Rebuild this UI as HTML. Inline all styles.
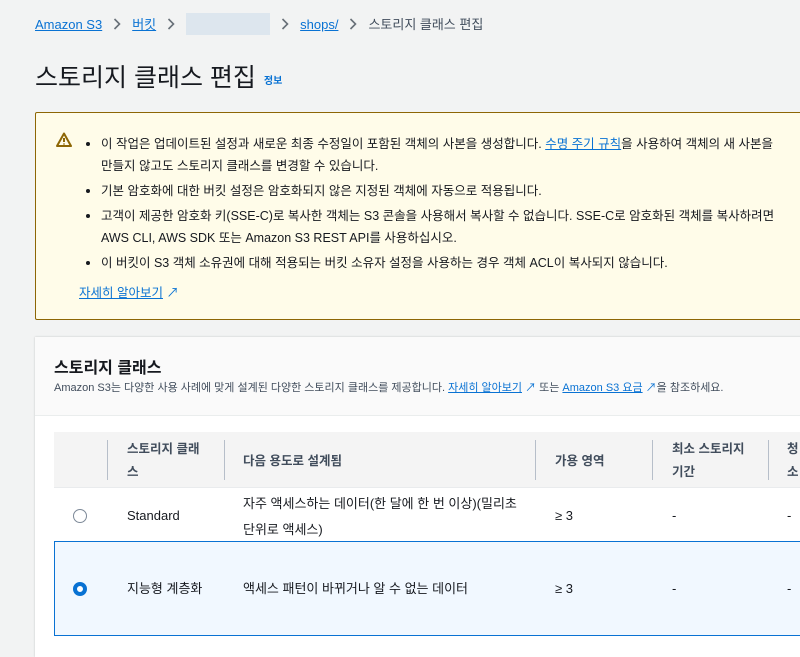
<!DOCTYPE html>
<html><head><meta charset="utf-8"><style>
*{box-sizing:border-box;margin:0;padding:0}
body{width:800px;height:646px;overflow:hidden;background:#f2f3f3;font-family:"Liberation Sans","Noto Sans CJK KR",sans-serif;color:#16191f;position:relative}
a{color:#0972d3;text-decoration:underline}
.abs{position:absolute;white-space:nowrap}
.bc{top:14px;left:35px;font-size:13px;color:#414d5c}
.bc svg{margin:0 11px -1px 11px}
.blur{display:inline-block;width:84px;height:22px;background:#dde6ee;vertical-align:middle;margin-top:-4px}
h1{position:absolute;left:35px;top:58px;font-size:25px;font-weight:400;color:#16191f}
.info{font-size:10px;font-weight:700;color:#0972d3;margin-left:8px;vertical-align:middle}
.warn{position:absolute;left:35px;top:112px;width:780px;height:208px;background:#fffce9;border:1px solid #8d6605;border-radius:2px}
.warn ul{position:absolute;left:48px;top:20px;font-size:12.5px;line-height:22px;list-style:none}
.warn li{position:relative;padding-left:17px;margin-bottom:3px}
.warn li:before{content:"";position:absolute;left:2px;top:9px;width:4px;height:4px;background:#16191f;border-radius:50%}
.card{position:absolute;left:35px;top:337px;width:780px;height:320px;background:#fff;box-shadow:0 0 2px rgba(0,0,0,.2)}
.ch{height:79px;background:#fafafa;border-bottom:1px solid #eaeded}
.th{position:absolute;left:19px;top:95px;width:760px;height:56px;background:#f4f4f4;border-bottom:1px solid #e9ebed}
.cell{position:absolute;font-size:13px;line-height:24px;white-space:nowrap}
.hdr{color:#414d5c;font-weight:700;font-size:12.5px}
.div{position:absolute;width:1px;height:40px;top:103px;background:#b6bec9}
.sel{position:absolute;left:19px;top:204px;width:760px;height:95px;background:#f1f8ff;border:1px solid #0972d3}
.r{position:absolute;width:14px;height:14px;border-radius:50%}
</style></head><body>
<div class="abs bc"><a>Amazon S3</a><svg width="8" height="12" viewBox="0 0 8 12"><path d="M1.5 1l5 5-5 5" fill="none" stroke="#687078" stroke-width="1.6"/></svg><a>버킷</a><svg width="8" height="12" viewBox="0 0 8 12"><path d="M1.5 1l5 5-5 5" fill="none" stroke="#687078" stroke-width="1.6"/></svg><span class="blur"></span><svg width="8" height="12" viewBox="0 0 8 12"><path d="M1.5 1l5 5-5 5" fill="none" stroke="#687078" stroke-width="1.6"/></svg><a>shops/</a><svg width="8" height="12" viewBox="0 0 8 12"><path d="M1.5 1l5 5-5 5" fill="none" stroke="#687078" stroke-width="1.6"/></svg>스토리지 클래스 편집</div>
<h1>스토리지 클래스 편집<span class="info">정보</span></h1>
<div class="warn">
<svg style="position:absolute;left:20px;top:19px" width="16" height="15" viewBox="0 0 16 15"><path d="M8 1.5L15 14H1Z" fill="none" stroke="#8d6605" stroke-width="2" stroke-linejoin="round"/><path d="M8 6v4M8 11.5v1" stroke="#8d6605" stroke-width="2"/></svg>
<ul>
<li>이 작업은 업데이트된 설정과 새로운 최종 수정일이 포함된 객체의 사본을 생성합니다. <a>수명 주기 규칙</a>을 사용하여 객체의 새 사본을<br>만들지 않고도 스토리지 클래스를 변경할 수 있습니다.</li>
<li>기본 암호화에 대한 버킷 설정은 암호화되지 않은 지정된 객체에 자동으로 적용됩니다.</li>
<li>고객이 제공한 암호화 키(SSE-C)로 복사한 객체는 S3 콘솔을 사용해서 복사할 수 없습니다. SSE-C로 암호화된 객체를 복사하려면<br>AWS CLI, AWS SDK 또는 Amazon S3 REST API를 사용하십시오.</li>
<li>이 버킷이 S3 객체 소유권에 대해 적용되는 버킷 소유자 설정을 사용하는 경우 객체 ACL이 복사되지 않습니다.</li>
</ul>
<div class="abs" style="left:43px;top:169px;font-size:12.5px"><a>자세히 알아보기</a> <span style="color:#0972d3">↗</span></div>
</div>
<div class="card">
<div class="ch">
<div class="abs" style="left:19px;top:17px;font-size:16px;font-weight:700">스토리지 클래스</div>
<div class="abs" style="left:19px;top:42px;font-size:11px;color:#414d5c">Amazon S3는 다양한 사용 사례에 맞게 설계된 다양한 스토리지 클래스를 제공합니다. <a>자세히 알아보기</a> <span style="color:#0972d3">↗</span> 또는 <a>Amazon S3 요금</a> <span style="color:#0972d3">↗</span>을 참조하세요.</div>
</div>
<div class="th"></div>
<div class="div" style="left:72px"></div><div class="div" style="left:189px"></div><div class="div" style="left:500px"></div><div class="div" style="left:617px"></div><div class="div" style="left:733px"></div>
<div class="cell hdr" style="left:92px;top:101px;line-height:23px">스토리지 클래<br>스</div>
<div class="cell hdr" style="left:208px;top:112px">다음 용도로 설계됨</div>
<div class="cell hdr" style="left:520px;top:112px">가용 영역</div>
<div class="cell hdr" style="left:637px;top:101px;line-height:23px">최소 스토리지<br>기간</div>
<div class="cell hdr" style="left:752px;top:101px;line-height:23px">청<br>소</div>
<div class="r" style="left:38px;top:172px;border:1.5px solid #7d8998;background:#fff"></div>
<div class="cell" style="left:92px;top:167px">Standard</div>
<div class="cell" style="left:208px;top:154px;line-height:26px">자주 액세스하는 데이터(한 달에 한 번 이상)(밀리초<br>단위로 액세스)</div>
<div class="cell" style="left:520px;top:167px">≥ 3</div>
<div class="cell" style="left:637px;top:167px">-</div>
<div class="cell" style="left:752px;top:167px">-</div>
<div class="sel"></div>
<div class="r" style="left:38px;top:245px;border:4px solid #0972d3;background:#fff"></div>
<div class="cell" style="left:92px;top:240px">지능형 계층화</div>
<div class="cell" style="left:208px;top:240px">액세스 패턴이 바뀌거나 알 수 없는 데이터</div>
<div class="cell" style="left:520px;top:240px">≥ 3</div>
<div class="cell" style="left:637px;top:240px">-</div>
<div class="cell" style="left:752px;top:240px">-</div>
</div>
</body></html>
